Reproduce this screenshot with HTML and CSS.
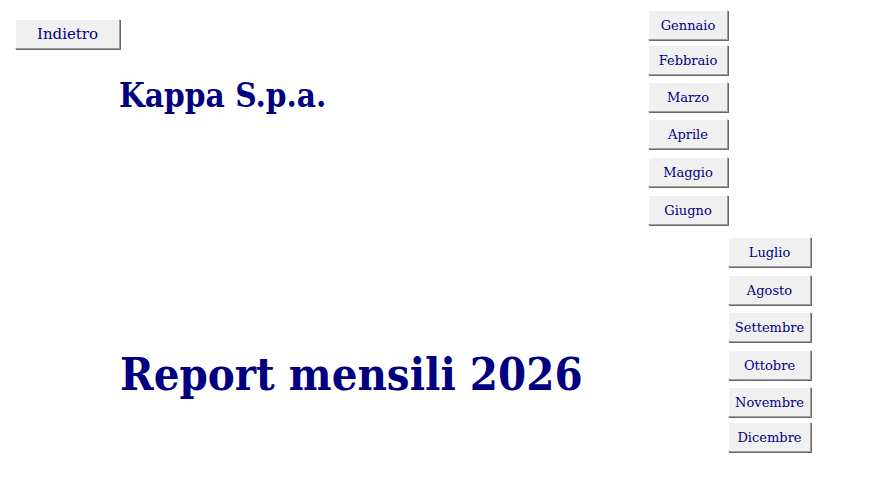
FILE: index.html
```html
<!DOCTYPE html>
<html lang="it">
<head>
<meta charset="utf-8">
<title>Report mensili</title>
<link rel="stylesheet" href="styles.css">
</head>
<body>
<div class="form">
  <div class="main">
    <button class="btn btn-back">Indietro</button>
    <h1 class="company">Kappa S.p.a.</h1>
    <h2 class="report">Report mensili 2026</h2>
  </div>
  <div class="col col-first">
    <button class="btn btn-month">Gennaio</button>
    <button class="btn btn-month">Febbraio</button>
    <button class="btn btn-month">Marzo</button>
    <button class="btn btn-month">Aprile</button>
    <button class="btn btn-month">Maggio</button>
    <button class="btn btn-month">Giugno</button>
  </div>
  <div class="col col-second">
    <button class="btn btn-month">Luglio</button>
    <button class="btn btn-month">Agosto</button>
    <button class="btn btn-month">Settembre</button>
    <button class="btn btn-month">Ottobre</button>
    <button class="btn btn-month">Novembre</button>
    <button class="btn btn-month">Dicembre</button>
  </div>
</div>
</body>
</html>
```

FILE: styles.css
```css
html, body {
  margin: 0;
  padding: 0;
  background: #ffffff;
}

.form {
  display: flex;
  align-items: flex-start;
  width: 869px;
  height: 498px;
  font-family: "DejaVu Serif", "Liberation Serif", serif;
  color: #000080;
}

.main {
  width: 648px;
  flex: none;
  display: flex;
  flex-direction: column;
  align-items: flex-start;
}

.btn {
  box-sizing: border-box;
  margin: 0;
  padding: 0;
  background: #f0f0f0;
  color: #000080;
  font-family: "DejaVu Serif", "Liberation Serif", serif;
  border-top: 1px solid #ffffff;
  border-left: 1px solid #ffffff;
  border-right: 1px solid #a0a0a0;
  border-bottom: 1px solid #a0a0a0;
  box-shadow: 1px 1px 0 #696969;
  cursor: pointer;
}

.btn-back {
  width: 105px;
  height: 30px;
  margin: 19px 0 0 15px;
  font-size: 15px;
}

.company {
  margin: 27px 0 0 119px;
  font-family: "DejaVu Serif Condensed", "DejaVu Serif", serif;
  font-stretch: condensed;
  font-weight: bold;
  font-size: 33px;
  line-height: 40px;
  color: #000080;
}

.report {
  margin: 233px 0 0 120px;
  font-family: "DejaVu Serif Condensed", "DejaVu Serif", serif;
  font-stretch: condensed;
  font-weight: bold;
  font-size: 45px;
  line-height: 52px;
  color: #000080;
}

.col {
  display: flex;
  flex-direction: column;
  flex: none;
}

.col-first {
  width: 80px;
  padding-top: 10px;
  gap: 7px;
}

.col-second {
  width: 83px;
  padding-top: 237px;
  gap: 7px;
}

.btn-month {
  width: 100%;
  height: 30px;
  font-size: 13px;
}

.col-first .btn-month:nth-child(2) { margin-top: -2px; }
.col-first .btn-month:nth-child(5),
.col-first .btn-month:nth-child(6) { margin-top: 1px; }
.col-second .btn-month:nth-child(2),
.col-second .btn-month:nth-child(4) { margin-top: 1px; }
.col-second .btn-month:nth-child(6) { margin-top: -2px; }
```
